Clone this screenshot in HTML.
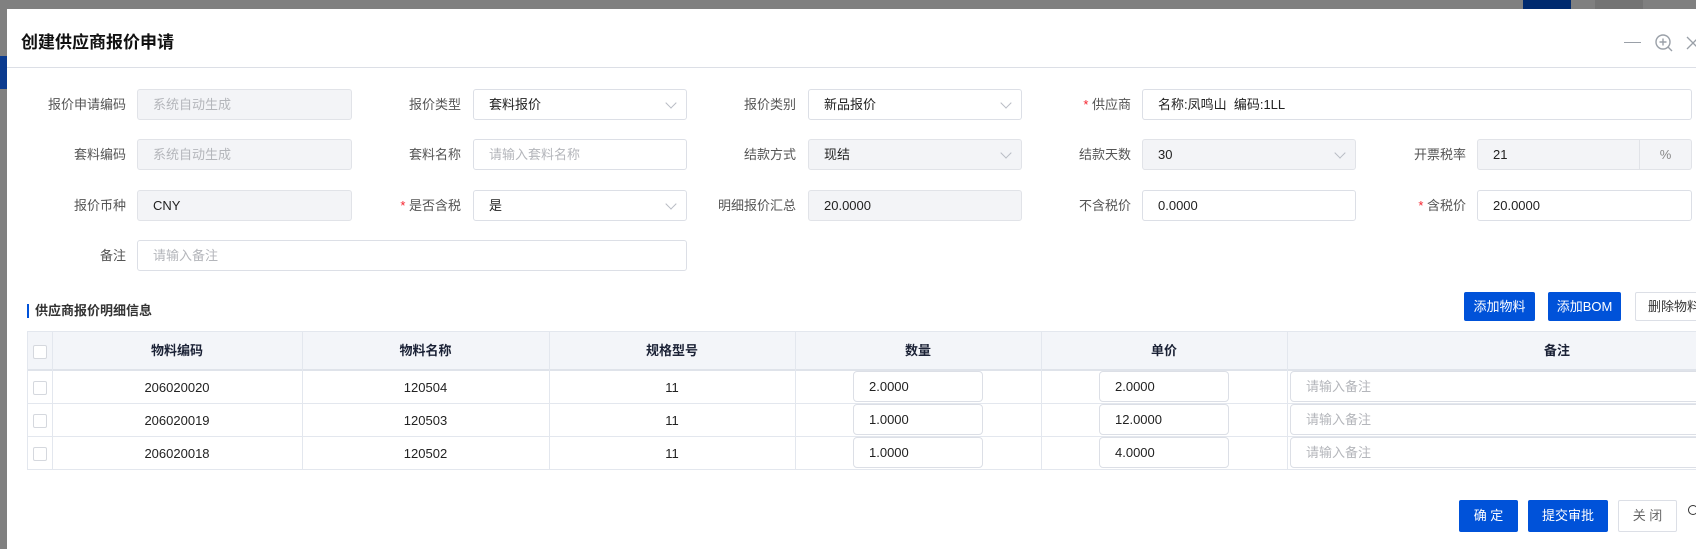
<!DOCTYPE html>
<html><head><meta charset="utf-8">
<style>
*{box-sizing:border-box;margin:0;padding:0}
body{width:1696px;height:546px;overflow:hidden;background:#808080;font-family:"Liberation Sans","Noto Sans CJK SC",sans-serif;font-size:13px;color:#333;position:relative}
.a{position:absolute}
.lbl{position:absolute;font-size:13px;color:#555;text-align:right;width:120px;line-height:31px}
.req:before{content:"* ";color:#f5222d}
.in{position:absolute;height:31px;border:1px solid #dcdfe6;border-radius:3px;background:#fff;padding-left:15px;line-height:29px;font-size:13px;color:#222}
.dis{background:#f3f4f7;border-color:#e1e3e8}
.arr{position:absolute;right:11px;top:9px;width:8px;height:8px;border-right:1px solid #b8bcc4;border-bottom:1px solid #b8bcc4;transform:rotate(45deg)}
.btn{position:absolute;height:29px;border-radius:2px;background:#0052d9;color:#fff;font-size:13px;text-align:center;line-height:29px}
.th{position:absolute;top:331px;height:39px;line-height:39px;text-align:center;font-weight:bold;color:#1b2236;font-size:13px}
.td{position:absolute;height:33px;line-height:33px;text-align:center;font-size:13px;color:#222}
.vl{position:absolute;top:331px;height:138px;width:1px;background:#e3e7ee}
.hl{position:absolute;left:27px;width:1680px;height:1px;background:#e3e7ee}
.cb{position:absolute;left:33px;width:14px;height:14px;border:1px solid #d5d8de;border-radius:2px;background:#fff}
.ci{position:absolute;height:31px;border:1px solid #dcdfe6;border-radius:4px;background:#fff;padding-left:15px;line-height:29px;font-size:13px;color:#222}
.in.ph,.ci.ph{color:#b4b6bb}
</style></head><body>
<div class="a" style="left:0;top:56px;width:7px;height:33px;background:#0b3b8f"></div>
<div class="a" style="left:1523px;top:0;width:48px;height:9px;background:#002a6e"></div>
<div class="a" style="left:1595px;top:0;width:48px;height:9px;background:#747474"></div>
<div class="a" style="left:7px;top:9px;width:1700px;height:540px;background:#fff"></div>
<div class="a" style="left:21px;top:28px;font-size:17px;font-weight:bold;color:#111">创建供应商报价申请</div>
<div class="a" style="left:7px;top:67px;width:1700px;height:1px;background:#dcdfe6"></div>
<div class="a" style="left:1624px;top:42px;width:17px;height:1px;background:#9aa0a8"></div>
<svg class="a" style="left:1654px;top:33px" width="20" height="20" viewBox="0 0 20 20" fill="none" stroke="#9aa0a8" stroke-width="1.4"><circle cx="9" cy="9" r="7"/><path d="M9 5.5v7M5.5 9h7M14 14l4 4"/></svg>
<svg class="a" style="left:1686px;top:36px" width="14" height="14" viewBox="0 0 14 14" stroke="#9aa0a8" stroke-width="1.3"><path d="M1 1l12 12M13 1L1 13"/></svg>

<div class="lbl" style="left:6px;top:89px">报价申请编码</div>
<div class="in dis ph" style="left:137px;top:89px;width:215px">系统自动生成</div>
<div class="lbl" style="left:341px;top:89px">报价类型</div>
<div class="in" style="left:473px;top:89px;width:214px">套料报价<i class="arr"></i></div>
<div class="lbl" style="left:676px;top:89px">报价类别</div>
<div class="in" style="left:808px;top:89px;width:214px">新品报价<i class="arr"></i></div>
<div class="lbl req" style="left:1011px;top:89px">供应商</div>
<div class="in" style="left:1142px;top:89px;width:550px">名称:凤鸣山&nbsp;&nbsp;编码:1LL</div>

<div class="lbl" style="left:6px;top:139px">套料编码</div>
<div class="in dis ph" style="left:137px;top:139px;width:215px">系统自动生成</div>
<div class="lbl" style="left:341px;top:139px">套料名称</div>
<div class="in ph" style="left:473px;top:139px;width:214px">请输入套料名称</div>
<div class="lbl" style="left:676px;top:139px">结款方式</div>
<div class="in dis" style="left:808px;top:139px;width:214px">现结<i class="arr"></i></div>
<div class="lbl" style="left:1011px;top:139px">结款天数</div>
<div class="in dis" style="left:1142px;top:139px;width:214px">30<i class="arr"></i></div>
<div class="lbl" style="left:1346px;top:139px">开票税率</div>
<div class="in dis" style="left:1477px;top:139px;width:215px">21<span class="a" style="left:161px;top:0;width:1px;height:29px;background:#e1e3e8"></span><span class="a" style="left:162px;width:51px;text-align:center;color:#888">%</span></div>

<div class="lbl" style="left:6px;top:190px">报价币种</div>
<div class="in dis" style="left:137px;top:190px;width:215px">CNY</div>
<div class="lbl req" style="left:341px;top:190px">是否含税</div>
<div class="in" style="left:473px;top:190px;width:214px">是<i class="arr"></i></div>
<div class="lbl" style="left:676px;top:190px">明细报价汇总</div>
<div class="in dis" style="left:808px;top:190px;width:214px">20.0000</div>
<div class="lbl" style="left:1011px;top:190px">不含税价</div>
<div class="in" style="left:1142px;top:190px;width:214px">0.0000</div>
<div class="lbl req" style="left:1346px;top:190px">含税价</div>
<div class="in" style="left:1477px;top:190px;width:215px">20.0000</div>

<div class="lbl" style="left:6px;top:240px">备注</div>
<div class="in ph" style="left:137px;top:240px;width:550px">请输入备注</div>

<div class="a" style="left:27px;top:304px;width:2px;height:14px;background:#0052d9"></div>
<div class="a" style="left:35px;top:302px;font-weight:bold;font-size:13px;color:#333;line-height:18px">供应商报价明细信息</div>
<div class="btn" style="left:1464px;top:292px;width:71px">添加物料</div>
<div class="btn" style="left:1548px;top:292px;width:73px">添加BOM</div>
<div class="btn" style="left:1635px;top:292px;width:78px;background:#fff;color:#333;border:1px solid #dcdfe6;line-height:27px">删除物料</div>

<div class="a" style="left:27px;top:331px;width:1680px;height:39px;background:#f3f5f9"></div>
<div class="hl" style="top:331px"></div>
<div class="hl" style="top:369px;height:2px;background:#dfe3ea"></div>
<div class="hl" style="top:403px"></div>
<div class="hl" style="top:436px"></div>
<div class="hl" style="top:469px"></div>
<div class="vl" style="left:27px"></div>
<div class="vl" style="left:52px"></div>
<div class="vl" style="left:302px"></div>
<div class="vl" style="left:549px"></div>
<div class="vl" style="left:795px"></div>
<div class="vl" style="left:1041px"></div>
<div class="vl" style="left:1287px"></div>
<div class="cb" style="top:345px"></div>
<div class="th" style="left:52px;width:250px">物料编码</div>
<div class="th" style="left:302px;width:247px">物料名称</div>
<div class="th" style="left:549px;width:246px">规格型号</div>
<div class="th" style="left:795px;width:246px">数量</div>
<div class="th" style="left:1041px;width:246px">单价</div>
<div class="th" style="left:1287px;width:540px">备注</div>

<div class="cb" style="top:381px"></div>
<div class="td" style="left:52px;top:371px;width:250px">206020020</div>
<div class="td" style="left:302px;top:371px;width:247px">120504</div>
<div class="td" style="left:549px;top:371px;width:246px">11</div>
<div class="ci" style="left:853px;top:371px;width:130px">2.0000</div>
<div class="ci" style="left:1099px;top:371px;width:130px">2.0000</div>
<div class="ci ph" style="left:1290px;top:371px;width:520px">请输入备注</div>

<div class="cb" style="top:414px"></div>
<div class="td" style="left:52px;top:404px;width:250px">206020019</div>
<div class="td" style="left:302px;top:404px;width:247px">120503</div>
<div class="td" style="left:549px;top:404px;width:246px">11</div>
<div class="ci" style="left:853px;top:404px;width:130px">1.0000</div>
<div class="ci" style="left:1099px;top:404px;width:130px">12.0000</div>
<div class="ci ph" style="left:1290px;top:404px;width:520px">请输入备注</div>

<div class="cb" style="top:447px"></div>
<div class="td" style="left:52px;top:437px;width:250px">206020018</div>
<div class="td" style="left:302px;top:437px;width:247px">120502</div>
<div class="td" style="left:549px;top:437px;width:246px">11</div>
<div class="ci" style="left:853px;top:437px;width:130px">1.0000</div>
<div class="ci" style="left:1099px;top:437px;width:130px">4.0000</div>
<div class="ci ph" style="left:1290px;top:437px;width:520px">请输入备注</div>

<div class="btn" style="left:1459px;top:500px;width:59px;height:32px;line-height:32px">确 定</div>
<div class="btn" style="left:1528px;top:500px;width:80px;height:32px;line-height:32px">提交审批</div>
<div class="btn" style="left:1618px;top:500px;width:59px;height:32px;line-height:30px;background:#fff;color:#666;border:1px solid #dcdfe6">关 闭</div>
<div class="a" style="left:1688px;top:505px;width:10px;height:10px;border:1.5px solid #333;border-radius:50%"></div>
</body></html>
